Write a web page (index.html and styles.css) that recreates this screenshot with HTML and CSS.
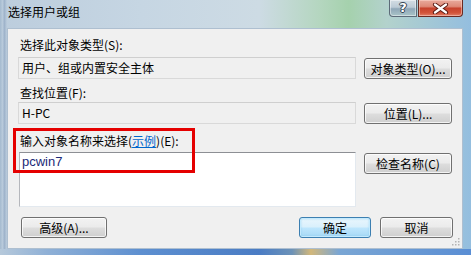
FILE: index.html
```html
<!DOCTYPE html>
<html lang="zh-CN">
<head>
<meta charset="utf-8">
<title>选择用户或组</title>
<link rel="stylesheet" href="styles.css">
</head>
<body>
<div class="window">
  <div class="titlebar">
    <div class="title">选择用户或组</div>
    <div class="caption-buttons">
      <div class="cap cap-help"><span class="cap-glyph">?</span></div>
      <div class="cap cap-close">
        <svg width="17" height="11" viewBox="0 0 17 11" aria-hidden="true">
          <path d="M3 1.5 L14 9.5 M14 1.5 L3 9.5" stroke="#5a1a12" stroke-width="4.2" stroke-linecap="round"/>
          <path d="M3 1.5 L14 9.5 M14 1.5 L3 9.5" stroke="#ffffff" stroke-width="2.2" stroke-linecap="round"/>
        </svg>
      </div>
    </div>
  </div>
  <div class="client">
    <div class="section s1">
      <div class="label">选择此对象类型(S):</div>
      <div class="row">
        <div class="field">用户、组或内置安全主体</div>
        <div class="btn">对象类型(O)...</div>
      </div>
    </div>
    <div class="section s2">
      <div class="label">查找位置(F):</div>
      <div class="row">
        <div class="field">H-PC</div>
        <div class="btn">位置(L)...</div>
      </div>
    </div>
    <div class="section s3">
      <div class="label">输入对象名称来选择(<span class="link">示例</span>)(E):</div>
      <div class="row">
        <div class="textarea">pcwin7</div>
        <div class="btn">检查名称(C)</div>
      </div>
    </div>
    <div class="footer">
      <div class="btn btn-adv">高级(A)...</div>
      <div class="footer-right">
        <div class="btn btn-default">确定</div>
        <div class="btn">取消</div>
      </div>
    </div>
    <div class="highlight"></div>
    <div class="grip">
      <svg width="8" height="8" viewBox="0 0 8 8" aria-hidden="true">
        <rect x="6" y="0" width="1.5" height="1.5" fill="#b4b4b4"/>
        <rect x="3" y="3" width="1.5" height="1.5" fill="#b4b4b4"/>
        <rect x="6" y="3" width="1.5" height="1.5" fill="#b4b4b4"/>
        <rect x="0" y="6" width="1.5" height="1.5" fill="#b4b4b4"/>
        <rect x="3" y="6" width="1.5" height="1.5" fill="#b4b4b4"/>
        <rect x="6" y="6" width="1.5" height="1.5" fill="#b4b4b4"/>
      </svg>
    </div>
  </div>
  <div class="bottom-frame"></div>
</div>
</body>
</html>
```

FILE: styles.css
```css
html, body {
  margin: 0;
  padding: 0;
}

body {
  width: 471px;
  height: 255px;
  overflow: hidden;
  font-family: "Noto Sans CJK SC", "Liberation Sans", sans-serif;
  font-size: 12px;
  color: #000;
}

.window {
  width: 471px;
  height: 255px;
  display: flex;
  flex-direction: column;
  background:
    linear-gradient(90deg, rgba(120,150,180,0.35) 0px, rgba(255,255,255,0) 3px, rgba(90,120,160,0.35) 4px, rgba(255,255,255,0) 7px),
    linear-gradient(90deg, #bccddd 0%, #c6d6e3 30%, #cddbe4 55%, #b4d6bf 68%, #a5d1ad 74%, #b3d2cc 82%, #94bedf 100%);
}

/* ---------- title bar ---------- */
.titlebar {
  height: 28px;
  display: flex;
  align-items: flex-start;
  flex: none;
}

.title {
  padding: 4px 0 0 8px;
  font-size: 12px;
  line-height: 16px;
  color: #000;
}

.caption-buttons {
  margin-left: auto;
  margin-right: 8px;
  display: flex;
  gap: 1px;
}

.cap {
  height: 17px;
  box-sizing: border-box;
  border: 1px solid #5c6b78;
  border-top: none;
  display: flex;
  align-items: center;
  justify-content: center;
}

.cap-help {
  width: 28px;
  border-radius: 0 0 0 4px;
  background: linear-gradient(180deg, #d3dde4 0%, #bccbd6 45%, #8fa7b8 55%, #a9c4c7 100%);
  box-shadow: inset 0 0 0 1px rgba(255,255,255,0.45);
}

.cap-glyph {
  font-family: "DejaVu Sans", sans-serif;
  font-weight: bold;
  font-size: 13px;
  line-height: 14px;
  color: #fff;
  text-shadow: 0 0 1px #243240, 1px 0 0 #3a4a58, -1px 0 0 #3a4a58, 0 1px 0 #3a4a58, 0 -1px 0 #3a4a58;
}

.cap-close {
  width: 45px;
  border-radius: 0 0 4px 0;
  border-color: #6a2a22;
  background: linear-gradient(180deg, #e8aa9c 0%, #df8a78 40%, #c7432d 52%, #d2543a 80%, #e0806a 100%);
  box-shadow: inset 0 0 0 1px rgba(255,220,210,0.5);
}

/* ---------- client area ---------- */
.client {
  position: relative;
  height: 221px;
  margin: 0 8px 0 7px;
  box-sizing: border-box;
  border: 1px solid #aebfd0;
  background: #f0f0f0;
  padding: 8px 9px 0 10px;
  display: flex;
  flex-direction: column;
  flex: none;
}

.label {
  line-height: 16px;
  height: 16px;
  padding-left: 2px;
  white-space: nowrap;
}

.link {
  color: #0066cc;
  text-decoration: underline;
}

.row {
  display: flex;
  gap: 8px;
  align-items: flex-start;
}

.s1 .row { margin-top: 4px; }
.s2 { margin-top: 6px; }
.s2 .row { margin-top: 1px; }
.s3 { margin-top: 9px; }
.s3 .row { margin-top: 3px; }

.field {
  width: 338px;
  height: 22px;
  box-sizing: border-box;
  border: 1px solid #d9d9d9;
  border-top-color: #cfcfcf;
  background: #f0f0f0;
  padding: 0 3px;
  line-height: 20px;
  white-space: nowrap;
}

.textarea {
  width: 337px;
  height: 55px;
  margin-left: 1px;
  box-sizing: border-box;
  border: 1px solid #abadb3;
  border-top-color: #8d8f94;
  border-right-color: #e3e9ef;
  border-bottom-color: #e3e9ef;
  border-left-color: #b5b7bc;
  background: #fff;
  padding: 1px 2px;
  font-family: "Liberation Sans", "DejaVu Sans", sans-serif;
  font-size: 13px;
  line-height: 16px;
  color: #1c2a78;
}

.btn {
  width: 88px;
  height: 21px;
  margin-top: 1px;
  box-sizing: border-box;
  border: 1px solid #707070;
  border-radius: 3px;
  background: linear-gradient(180deg, #f2f2f2 0%, #ebebeb 48%, #dddddd 52%, #cfcfcf 100%);
  box-shadow: inset 0 0 0 1px rgba(255,255,255,0.75);
  display: flex;
  align-items: center;
  justify-content: center;
  line-height: 16px;
  white-space: nowrap;
}

.s3 .btn { margin-top: 1px; }

.footer {
  margin-top: 10px;
  display: flex;
  align-items: flex-start;
  padding-left: 3px;
}

.footer .btn { margin-top: 0; }

.btn-adv {
  width: 86px;
}

.footer-right {
  margin-left: auto;
  display: flex;
  gap: 9px;
}

.footer-right .btn {
  width: 73px;
}

.footer-right .btn-default {
  width: 72px;
  border-color: #3c7fb1;
  background: linear-gradient(180deg, #eaf6fd 0%, #d9f0fc 48%, #bee6fd 52%, #a7d9f5 100%);
  box-shadow: inset 0 0 0 1px #c4eafd, inset 0 0 2px 1px rgba(120,200,240,0.6);
}

.highlight {
  position: absolute;
  left: 5px;
  top: 99px;
  width: 182px;
  height: 45px;
  box-sizing: border-box;
  border: 3px solid #e50000;
  pointer-events: none;
}

.grip {
  position: absolute;
  right: 2px;
  bottom: 2px;
  width: 8px;
  height: 8px;
  line-height: 0;
}

.bottom-frame {
  flex: 1;
  background: linear-gradient(90deg, #b6c9db 0%, #8fb0d6 10%, #5d8fd0 30%, #4a7cc4 55%, #6c92b8 62%, #d2b77a 66%, #7aa6d4 72%, #5a8ed4 100%);
}
```
